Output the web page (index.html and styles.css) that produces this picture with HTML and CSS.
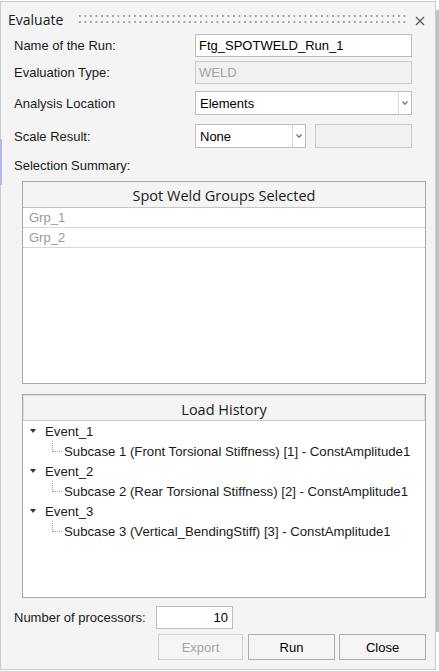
FILE: index.html
```html
<!DOCTYPE html>
<html>
<head>
<meta charset="utf-8">
<link rel="stylesheet" href="styles.css">
</head>
<body>
<div class="accent"></div>
<div class="edge-strip"></div>
<div class="dialog">
  <div class="titlebar">
    <span class="title">Evaluate</span>
    <span class="grip"></span>
    <svg class="close" width="10" height="10" viewBox="0 0 10 10"><path d="M1 1 L9 9 M9 1 L1 9" stroke="#5a5a5a" stroke-width="1.3" fill="none"/></svg>
  </div>

  <div class="form">
    <div class="row row-name">
      <div class="label">Name of the Run:</div>
      <div class="field input">Ftg_SPOTWELD_Run_1</div>
    </div>
    <div class="row row-type">
      <div class="label">Evaluation Type:</div>
      <div class="field input disabled">WELD</div>
    </div>
    <div class="row row-loc">
      <div class="label">Analysis Location</div>
      <div class="field select">
        <span class="sel-text">Elements</span>
        <span class="sel-arrow"><svg width="6" height="4" viewBox="0 0 6 4"><path d="M0.5 0.5 L3 3.2 L5.5 0.5" stroke="#7a7a7a" stroke-width="1.4" fill="none"/></svg></span>
      </div>
    </div>
    <div class="row row-scale">
      <div class="label">Scale Result:</div>
      <div class="scale-fields">
        <div class="select select-small">
          <span class="sel-text">None</span>
          <span class="sel-arrow"><svg width="6" height="4" viewBox="0 0 6 4"><path d="M0.5 0.5 L3 3.2 L5.5 0.5" stroke="#7a7a7a" stroke-width="1.4" fill="none"/></svg></span>
        </div>
        <div class="input disabled scale-box"></div>
      </div>
    </div>
  </div>

  <div class="section-label">Selection Summary:</div>

  <div class="table table-groups">
    <div class="thead">Spot Weld Groups Selected</div>
    <div class="tbody">
      <div class="trow">Grp_1</div>
      <div class="trow">Grp_2</div>
    </div>
  </div>

  <div class="table table-load">
    <div class="thead">Load History</div>
    <div class="tree">
      <div class="node event"><span class="tri"></span><span>Event_1</span></div>
      <div class="node sub"><span class="conn"></span><span>Subcase 1 (Front Torsional Stiffness) [1] - ConstAmplitude1</span></div>
      <div class="node event"><span class="tri"></span><span>Event_2</span></div>
      <div class="node sub"><span class="conn"></span><span>Subcase 2 (Rear Torsional Stiffness) [2] - ConstAmplitude1</span></div>
      <div class="node event"><span class="tri"></span><span>Event_3</span></div>
      <div class="node sub"><span class="conn"></span><span>Subcase 3 (Vertical_BendingStiff) [3] - ConstAmplitude1</span></div>
    </div>
  </div>

  <div class="procs">
    <div class="procs-label">Number of processors:</div>
    <div class="input procs-input">10</div>
  </div>

  <div class="buttons">
    <div class="btn btn-export">Export</div>
    <div class="btn btn-run">Run</div>
    <div class="btn btn-close">Close</div>
  </div>
</div>
</body>
</html>
```
FILE: styles.css
```css
html, body {
  margin: 0;
  padding: 0;
  background: #ffffff;
}
body {
  font-family: "Liberation Sans", Arial, sans-serif;
  font-size: 13px;
  color: #1a1a1a;
  width: 439px;
  height: 671px;
  overflow: hidden;
}

.accent {
  position: absolute;
  left: 0;
  top: 139px;
  width: 2px;
  height: 46px;
  background: #b6b6ee;
}
.edge-strip {
  position: absolute;
  left: 436px;
  top: 10px;
  width: 3px;
  height: 622px;
  background: #c2c2c2;
}

.dialog {
  box-sizing: border-box;
  width: 436px;
  height: 669px;
  margin-top: 1px;
  border: 1px solid #cbcbcb;
  background: #f4f4f4;
  display: flex;
  flex-direction: column;
}

/* title bar */
.titlebar {
  box-sizing: border-box;
  height: 32px;
  padding: 9px 0 0 7px;
  display: flex;
  align-items: flex-start;
}
.title {
  font-family: "Open Sans", "Noto Sans", sans-serif;
  font-size: 14px;
  line-height: 18px;
  color: #1a1a1a;
}
.grip {
  width: 327px;
  height: 8px;
  margin: 4px 0 0 16px;
  background-image: conic-gradient(from 270deg at 2px 2px, #a2a2a2 90deg, transparent 0);
  background-size: 5.5px 6px;
  background-repeat: repeat;
}
.close {
  margin: 5px 0 0 9px;
}

/* form */
.form {
  padding-left: 13px;
  display: flex;
  flex-direction: column;
}
.row {
  display: flex;
  align-items: center;
}
.row-name { height: 23px; }
.row-type { height: 23px; margin-top: 4px; }
.row-loc { height: 24px; margin-top: 7px; }
.row-scale { height: 24px; margin-top: 9px; }
.label {
  width: 181px;
  flex: none;
}
.input {
  box-sizing: border-box;
  height: 100%;
  background: #ffffff;
  border: 1px solid #bdbdbd;
  padding-left: 3px;
  display: flex;
  align-items: center;
  color: #000;
}
.field {
  width: 217px;
}
.input.disabled {
  background: #f0f0f0;
  border-color: #c9c9c9;
  color: #a3a3a3;
}
.select {
  box-sizing: border-box;
  height: 100%;
  background: #ffffff;
  border: 1px solid #bdbdbd;
  display: flex;
  align-items: stretch;
  color: #000;
}
.sel-text {
  flex: 1;
  display: flex;
  align-items: center;
  padding-left: 4px;
}
.sel-arrow {
  width: 12px;
  border-left: 1px solid #d9d9d9;
  display: flex;
  align-items: center;
  justify-content: center;
}
.scale-fields {
  display: flex;
  height: 100%;
  gap: 9px;
}
.select-small {
  width: 111px;
}
.scale-box {
  width: 97px;
}

.section-label {
  margin: 10px 0 0 13px;
  line-height: 15px;
}

/* tables */
.table {
  box-sizing: border-box;
  width: 404px;
  margin-left: 21px;
  border: 1px solid #a9a9a9;
  background: #ffffff;
  display: flex;
  flex-direction: column;
}
.table-groups {
  margin-top: 8px;
  height: 203px;
}
.table-load {
  margin-top: 10px;
  height: 204px;
}
.thead {
  box-sizing: border-box;
  height: 26px;
  padding-top: 4px;
  background: #f4f4f4;
  border-bottom: 1px solid #c6c6c6;
  text-align: center;
  font-family: "Open Sans", "Noto Sans", sans-serif;
  font-size: 14.5px;
  line-height: 20px;
  color: #1a1a1a;
}
.table-load .thead {
  border: 1px solid #dedede;
  border-bottom-color: #c6c6c6;
}
.trow {
  box-sizing: border-box;
  height: 20px;
  border-bottom: 1px solid #d6d6d6;
  padding-left: 6px;
  line-height: 19px;
  color: #9a9a9a;
}

/* tree */
.tree {
  display: flex;
  flex-direction: column;
  font-size: 13.2px;
}
.node {
  height: 20px;
  display: flex;
  align-items: center;
  white-space: nowrap;
  color: #1a1a1a;
}
.event {
  padding-left: 7px;
}
.tri {
  width: 0;
  height: 0;
  border-left: 3px solid transparent;
  border-right: 3px solid transparent;
  border-top: 4px solid #333333;
  margin-right: 9px;
  margin-top: -1px;
}
.sub {
  padding-left: 29px;
  align-items: center;
}
.conn {
  align-self: flex-start;
  width: 9px;
  height: 10px;
  border-left: 1px dotted #9a9a9a;
  border-bottom: 1px dotted #9a9a9a;
  margin-right: 2px;
}

/* processors */
.procs {
  display: flex;
  align-items: center;
  margin-top: 8px;
  padding-left: 13px;
  height: 23px;
}
.procs-label {
  width: 142px;
}
.procs-input {
  width: 77px;
  justify-content: flex-end;
  padding-right: 4px;
}

/* buttons */
.buttons {
  display: flex;
  margin-top: 5px;
  padding-left: 157px;
  height: 26px;
}
.btn {
  box-sizing: border-box;
  height: 26px;
  border: 1px solid #adadad;
  background: #f5f5f5;
  display: flex;
  align-items: center;
  justify-content: center;
  color: #000;
}
.btn-export {
  width: 85px;
  border-color: #cfcfcf;
  color: #a3a3a3;
}
.btn-run {
  width: 87px;
  margin-left: 5px;
}
.btn-close {
  width: 87px;
  margin-left: 4px;
}
```
